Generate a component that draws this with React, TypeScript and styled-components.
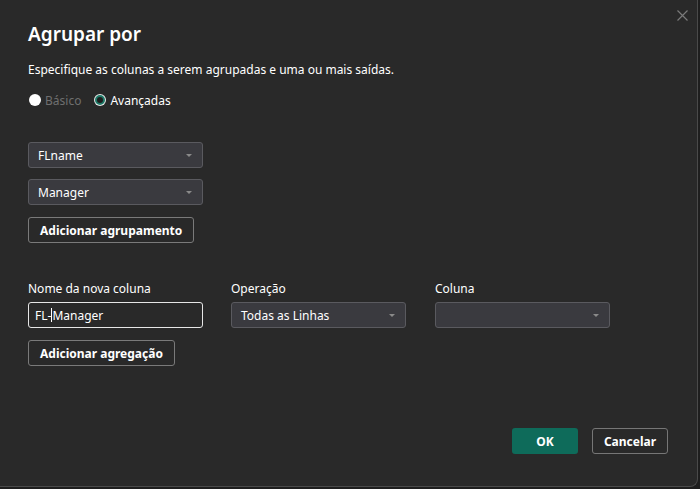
import React from "react";
import styled, { createGlobalStyle } from "styled-components";

const Global = createGlobalStyle`
  html, body { margin: 0; padding: 0; background: #1e1e1e; }
  body { width: 700px; height: 489px; overflow: hidden; font-family: "Noto Sans", "Open Sans", sans-serif; }
`;

const Page = styled.div`
  width: 700px;
  height: 489px;
  background: #1e1e1e;
`;

const Dialog = styled.div`
  position: relative;
  box-sizing: border-box;
  width: 698px;
  height: 487px;
  background: #292929;
  border-right: 1px solid #4a4a4a;
  border-bottom: 1px solid #4a4a4a;
  border-bottom-right-radius: 8px;
  padding: 20px 28px 0 28px;
  display: flex;
  flex-direction: column;
  color: #ffffff;
`;

const Close = styled.button`
  position: absolute;
  top: 7px;
  right: 7px;
  width: 16px;
  height: 16px;
  padding: 0;
  border: none;
  background: transparent;
  display: flex;
  align-items: center;
  justify-content: center;
`;

const Title = styled.h1`
  margin: 0;
  font-size: 19px;
  font-weight: 600;
  line-height: 28px;
  color: #ffffff;
`;

const Description = styled.p`
  margin: 14px 0 0 0;
  font-size: 12px;
  line-height: 16px;
  color: #ffffff;
`;

const RadioRow = styled.div`
  margin-top: 14px;
  display: flex;
  align-items: center;
  gap: 13px;
  height: 16px;
`;

const RadioItem = styled.label<{ $disabled?: boolean }>`
  display: flex;
  align-items: center;
  gap: 4px;
  font-size: 12px;
  color: ${(p) => (p.$disabled ? "#6f6f6f" : "#ffffff")};
`;

const RadioDot = styled.span<{ $checked?: boolean }>`
  box-sizing: border-box;
  width: ${(p) => (p.$checked ? 10 : 12)}px;
  height: ${(p) => (p.$checked ? 10 : 12)}px;
  border-radius: 50%;
  margin: ${(p) => (p.$checked ? "0 1px 0 1px" : "0 0 0 1px")};
  background: ${(p) => (p.$checked ? "#1d1d1d" : "#ffffff")};
  border: ${(p) => (p.$checked ? "2px solid #1f7a68" : "none")};
  box-shadow: ${(p) => (p.$checked ? "0 0 0 1px #e8e8e8" : "none")};
`;

const GroupList = styled.div`
  margin-top: 34px;
  display: flex;
  flex-direction: column;
  gap: 11px;
  align-items: flex-start;
`;

const Select = styled.div<{ $w?: number }>`
  box-sizing: border-box;
  width: ${(p) => p.$w ?? 175}px;
  height: 26px;
  background: #3a3a3f;
  border: 1px solid #5a5a5f;
  border-radius: 3px;
  display: flex;
  align-items: center;
  justify-content: space-between;
  padding: 0 10px 0 9px;
  font-size: 12px;
  color: #ffffff;
`;

const Caret = styled.span`
  width: 0;
  height: 0;
  border-left: 3px solid transparent;
  border-right: 3px solid transparent;
  border-top: 3px solid #8a8a8a;
`;

const OutlineButton = styled.button`
  box-sizing: border-box;
  height: 26px;
  padding: 0 11px;
  background: #292929;
  border: 1px solid #7a7a7a;
  border-radius: 3px;
  color: #ffffff;
  font-family: inherit;
  font-size: 12px;
  font-weight: 700;
  cursor: pointer;
`;

const GroupButtonWrap = styled.div`
  margin-top: 1px;
`;

const AggGrid = styled.div`
  margin-top: 38px;
  display: grid;
  grid-template-columns: 203px 204px 175px;
  row-gap: 5px;
`;

const FieldLabel = styled.div`
  font-size: 12px;
  line-height: 16px;
  color: #ffffff;
`;

const TextInput = styled.div`
  box-sizing: border-box;
  width: 175px;
  height: 26px;
  background: #292929;
  border: 1px solid #e6e6e6;
  border-radius: 3px;
  display: flex;
  align-items: center;
  padding: 0 6px;
  font-size: 12px;
  color: #ffffff;
`;

const Cursor = styled.span`
  display: inline-block;
  width: 1px;
  height: 14px;
  background: #ffffff;
`;

const AggButtonWrap = styled.div`
  margin-top: 12px;
`;

const Footer = styled.div`
  margin-top: auto;
  margin-bottom: 32px;
  display: flex;
  justify-content: flex-end;
  gap: 14px;
  padding-right: 1px;
`;

const PrimaryButton = styled.button`
  box-sizing: border-box;
  width: 66px;
  height: 26px;
  background: #0e6b5a;
  border: none;
  border-radius: 3px;
  color: #ffffff;
  font-family: inherit;
  font-size: 12px;
  font-weight: 700;
`;

const SecondaryButton = styled(OutlineButton)`
  width: 76px;
  padding: 0;
  border-color: #767676;
`;

export default function App() {
  return (
    <Page>
      <Global />
      <Dialog>
        <Close aria-label="Fechar">
          <svg width="11" height="11" viewBox="0 0 11 11">
            <path d="M0.5 0.5 L10.5 10.5 M10.5 0.5 L0.5 10.5" stroke="#7a7a7a" strokeWidth="1.2" />
          </svg>
        </Close>
        <Title>Agrupar por</Title>
        <Description>Especifique as colunas a serem agrupadas e uma ou mais saídas.</Description>
        <RadioRow>
          <RadioItem $disabled>
            <RadioDot />
            Básico
          </RadioItem>
          <RadioItem>
            <RadioDot $checked />
            Avançadas
          </RadioItem>
        </RadioRow>
        <GroupList>
          <Select>
            FLname
            <Caret />
          </Select>
          <Select>
            Manager
            <Caret />
          </Select>
          <GroupButtonWrap>
            <OutlineButton>Adicionar agrupamento</OutlineButton>
          </GroupButtonWrap>
        </GroupList>
        <AggGrid>
          <FieldLabel>Nome da nova coluna</FieldLabel>
          <FieldLabel>Operação</FieldLabel>
          <FieldLabel>Coluna</FieldLabel>
          <TextInput>
            FL-<Cursor />Manager
          </TextInput>
          <Select>
            Todas as Linhas
            <Caret />
          </Select>
          <Select>
            <span />
            <Caret />
          </Select>
        </AggGrid>
        <AggButtonWrap>
          <OutlineButton>Adicionar agregação</OutlineButton>
        </AggButtonWrap>
        <Footer>
          <PrimaryButton>OK</PrimaryButton>
          <SecondaryButton>Cancelar</SecondaryButton>
        </Footer>
      </Dialog>
    </Page>
  );
}
